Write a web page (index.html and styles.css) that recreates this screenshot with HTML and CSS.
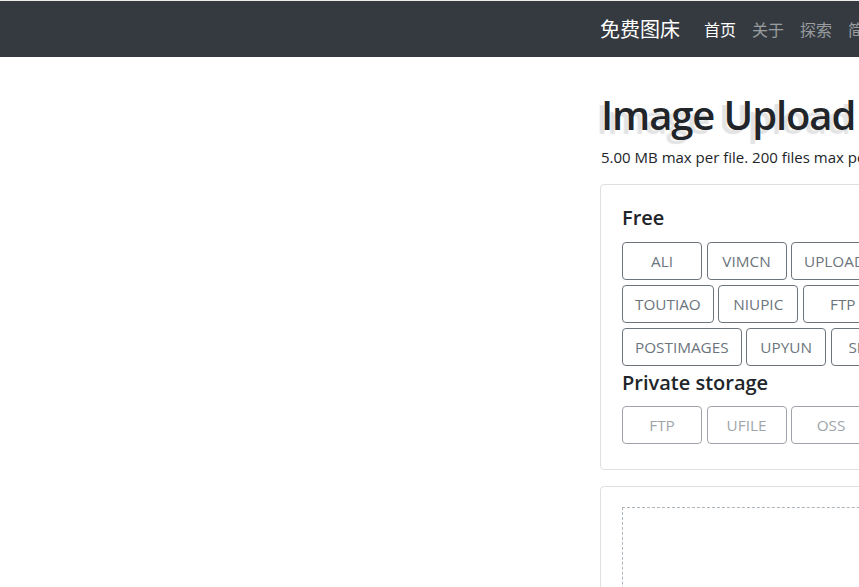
FILE: index.html
```html
<!DOCTYPE html>
<html lang="zh-CN">
<head>
<meta charset="utf-8">
<title>免费图床</title>
<link rel="stylesheet" href="styles.css">
</head>
<body>
<nav class="navbar">
  <div class="nav-inner">
    <a class="brand" href="#">免费图床</a>
    <ul class="nav-links">
      <li><a class="nav-link active" href="#">首页</a></li>
      <li><a class="nav-link" href="#">关于</a></li>
      <li><a class="nav-link" href="#">探索</a></li>
      <li><a class="nav-link" href="#">简介</a></li>
    </ul>
  </div>
</nav>
<main class="container">
  <h1 class="title">Image Upload</h1>
  <p class="subtitle">5.00 MB max per file. 200 files max per request.</p>
  <section class="card">
    <h5 class="group-title">Free</h5>
    <div class="btn-row">
      <button class="btn">ALI</button>
      <button class="btn">VIMCN</button>
      <button class="btn">UPLOADCC</button>
      <button class="btn">SOUGOU</button>
      <button class="btn">JUEJIN</button>
    </div>
    <div class="btn-row">
      <button class="btn">TOUTIAO</button>
      <button class="btn">NIUPIC</button>
      <button class="btn">FTP</button>
      <button class="btn">QIHOO</button>
      <button class="btn">IMGBB</button>
    </div>
    <div class="btn-row">
      <button class="btn">POSTIMAGES</button>
      <button class="btn">UPYUN</button>
      <button class="btn">SMMS</button>
      <button class="btn">GITHUB</button>
    </div>
    <h5 class="group-title private">Private storage</h5>
    <div class="btn-row last">
      <button class="btn" disabled>FTP</button>
      <button class="btn" disabled>UFILE</button>
      <button class="btn" disabled>OSS</button>
      <button class="btn" disabled>COS</button>
    </div>
  </section>
  <section class="card">
    <div class="dropzone"></div>
  </section>
</main>
</body>
</html>
```

FILE: styles.css
```css
html, body {
  margin: 0;
  padding: 0;
}
body {
  border-top: 1px solid #ececec;
  overflow: hidden;
  font-family: "Open Sans", "Noto Sans", "Noto Sans CJK SC", sans-serif;
  color: #212529;
  background: #fff;
  width: 859px;
  height: 586px;
}
.navbar {
  background: #343a40;
  height: 56px;
  width: 2000px;
}
.nav-inner {
  margin-left: 585px;
  padding: 0 15px;
  height: 56px;
  display: flex;
  align-items: center;
}
.brand {
  font-family: "Noto Sans CJK SC", sans-serif;
  font-size: 20px;
  color: #fff;
  text-decoration: none;
  margin-right: 16px;
  line-height: 30px;
}
.nav-links {
  display: flex;
  list-style: none;
  margin: 0;
  padding: 0;
  white-space: nowrap;
}
.nav-link {
  display: block;
  padding: 8px;
  font-family: "Noto Sans CJK SC", sans-serif;
  font-size: 16px;
  line-height: 24px;
  color: rgba(255, 255, 255, 0.5);
  text-decoration: none;
}
.nav-link.active {
  color: #fff;
}
.container {
  margin-left: 585px;
  width: 1140px;
  padding: 0 15px;
  box-sizing: border-box;
}
.title {
  font-size: 40px;
  font-weight: 600;
  letter-spacing: -1.1px;
  line-height: 48px;
  margin: 34px 0 6px;
  padding-left: 1px;
  text-shadow: -5px 4px 1px rgba(0, 0, 0, 0.11);
  white-space: nowrap;
}
.subtitle {
  font-size: 15px;
  line-height: 24px;
  margin: 0 0 15px;
  padding-left: 1px;
  white-space: nowrap;
}
.card {
  border: 1px solid rgba(0, 0, 0, 0.125);
  border-radius: 4px;
  padding: 20px 20px 20px 21px;
  margin-bottom: 16px;
}
.group-title {
  font-size: 20px;
  font-weight: 600;
  line-height: 24px;
  margin: 1px 0 12px;
}
.group-title.private {
  margin: 4px 0 11px;
}
.btn-row {
  display: flex;
  gap: 4.5px;
  margin-bottom: 5px;
  white-space: nowrap;
}
.btn {
  font-family: inherit;
  font-size: 15.3px;
  line-height: 24px;
  padding: 6px 12px;
  min-width: 80px;
  color: #6c757d;
  background: transparent;
  border: 1px solid #6c757d;
  border-radius: 4px;
}
.btn:disabled {
  opacity: 0.65;
}
.dropzone {
  border: 1px dashed #adb5bd;
  height: 200px;
}
```
